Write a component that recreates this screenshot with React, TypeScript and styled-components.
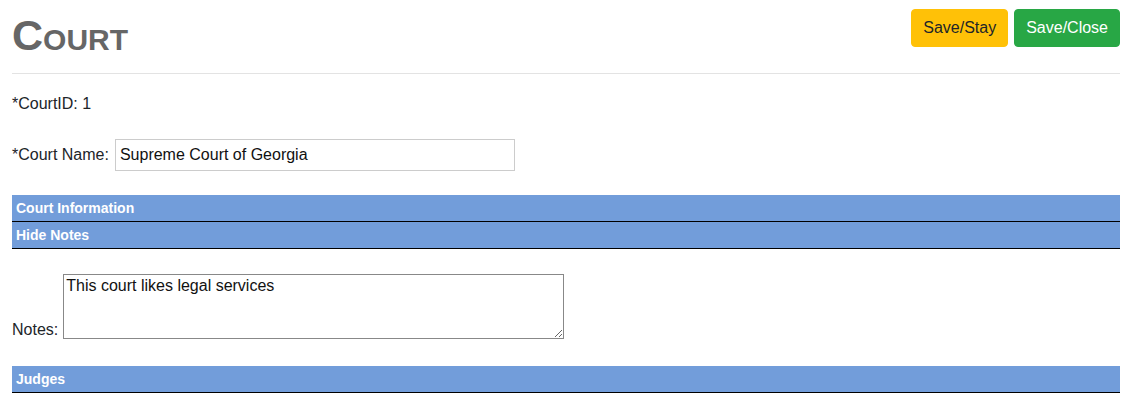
import styled, { createGlobalStyle } from 'styled-components';

const GlobalStyle = createGlobalStyle`
  body {
    margin: 0;
    background: #fff;
    font-family: "Liberation Sans", Arial, sans-serif;
    font-size: 16px;
    color: #212529;
  }
`;

const Page = styled.div`
  padding: 0 12px;
`;

const Header = styled.div`
  display: flex;
  justify-content: space-between;
  align-items: flex-start;
`;

const Title = styled.h1`
  margin: 11px 0 0;
  font-size: 43px;
  font-weight: bold;
  font-variant: small-caps;
  color: #666;
  line-height: 48px;
`;

const Actions = styled.div`
  display: flex;
  gap: 6px;
  margin-top: 9px;
`;

const Button = styled.button<{ $variant: 'warning' | 'success' }>`
  font-family: inherit;
  font-size: 16px;
  line-height: 24px;
  padding: 6px 11px;
  border: 1px solid transparent;
  border-radius: 4px;
  cursor: pointer;
  background: ${(p) => (p.$variant === 'warning' ? '#ffc107' : '#28a745')};
  border-color: ${(p) => (p.$variant === 'warning' ? '#ffc107' : '#28a745')};
  color: ${(p) => (p.$variant === 'warning' ? '#212529' : '#fff')};
`;

const Divider = styled.hr`
  margin: 14px 0 0;
  border: 0;
  border-top: 1px solid #e3e3e3;
`;

const Field = styled.div<{ $top: number; $gap?: number }>`
  display: flex;
  align-items: center;
  gap: ${(p) => p.$gap ?? 4}px;
  margin-top: ${(p) => p.$top}px;
  line-height: 18px;
`;

const NotesRow = styled(Field)`
  align-items: flex-end;
`;

const TextInput = styled.input`
  box-sizing: border-box;
  width: 400px;
  height: 32px;
  padding: 0 4px;
  border: 1px solid #ccc;
  font-family: inherit;
  font-size: 16px;
  color: #111;
  outline: none;
`;

const NotesArea = styled.textarea`
  box-sizing: border-box;
  width: 501px;
  height: 65px;
  margin: 0;
  padding: 2px;
  border: 1px solid #888;
  font-family: inherit;
  font-size: 16px;
  line-height: 18px;
  color: #111;
  outline: none;
  display: block;
`;

const SectionBar = styled.div<{ $top?: number }>`
  margin-top: ${(p) => p.$top ?? 0}px;
  height: 26px;
  padding-left: 4px;
  display: flex;
  align-items: center;
  background: #729dda;
  border-bottom: 1px solid #000;
  color: #fff;
  font-size: 14px;
  font-weight: bold;
`;

export default function App() {
  return (
    <>
      <GlobalStyle />
      <Page>
        <Header>
          <Title>Court</Title>
          <Actions>
            <Button $variant="warning">Save/Stay</Button>
            <Button $variant="success">Save/Close</Button>
          </Actions>
        </Header>
        <Divider />
        <Field $top={21}>*CourtID: 1</Field>
        <Field $top={26} $gap={6}>
          <span>*Court Name:</span>
          <TextInput defaultValue="Supreme Court of Georgia" />
        </Field>
        <SectionBar $top={24}>Court Information</SectionBar>
        <SectionBar>Hide Notes</SectionBar>
        <NotesRow $top={25} $gap={5}>
          <span>Notes:</span>
          <NotesArea defaultValue="This court likes legal services" />
        </NotesRow>
        <SectionBar $top={27}>Judges</SectionBar>
      </Page>
    </>
  );
}
